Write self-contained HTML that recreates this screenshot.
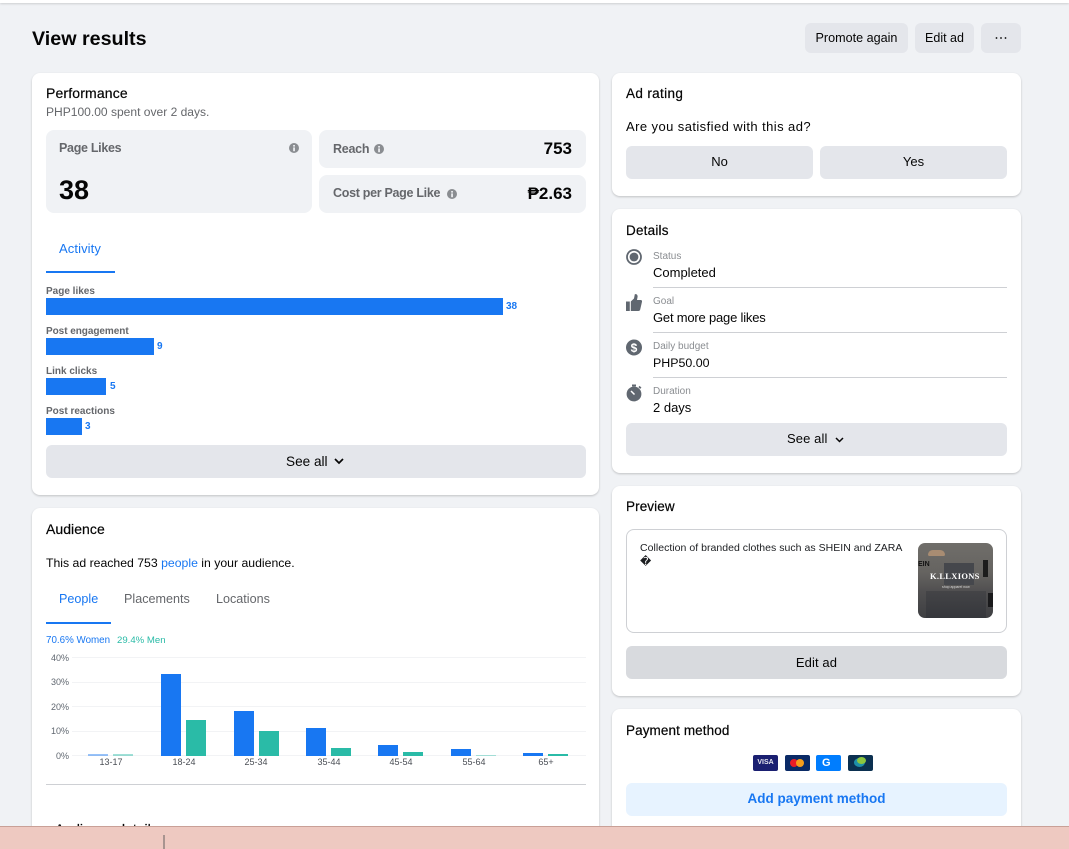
<!DOCTYPE html>
<html><head><meta charset="utf-8"><style>
html,body{margin:0;padding:0;width:1069px;height:849px;overflow:hidden;background:#f0f2f5;font-family:"Liberation Sans",sans-serif;color:#050505}
div,span.a,svg.a{position:absolute}
.t{white-space:nowrap;line-height:16px;font-size:13px}
.card{background:#fff;border-radius:8px;box-shadow:0 1px 2px rgba(0,0,0,.2)}
.btn{background:#e4e6eb;border-radius:6px}
.c{text-align:center}
.h{font-size:14px;line-height:18px;white-space:nowrap;-webkit-text-stroke:.2px #050505}
.g{background:#f0f2f5;border-radius:8px}
.sub{color:#65676b;font-weight:bold}
.lab{font-size:10px;font-weight:bold;color:#65676b;white-space:nowrap;line-height:12px}
.bar{background:#1877f2;left:46px;height:17px}
.num{font-size:10px;font-weight:bold;color:#1877f2;line-height:12px}
.dl{font-size:10px;color:#8a8d91;line-height:12px;left:653px;white-space:nowrap}
.dv{font-size:13px;line-height:16px;left:653px;white-space:nowrap}
.hr{left:653px;width:354px;height:1px;background:#ced0d4}
.gl{left:72px;width:514px;height:1px;background:#f2f3f5}
.yl{font-size:9px;color:#606770;width:24px;left:45px;text-align:right;line-height:10px}
.xl{font-size:9px;color:#4b4f56;width:50px;text-align:center;line-height:10px}
.f{background:#1877f2;width:20px}.m{background:#2abba7;width:20px}
</style></head><body>
<div style="left:0;top:0;width:1069px;height:3px;background:#fff;box-shadow:0 1px 2px rgba(0,0,0,.15)"></div>
<div class="t" style="left:32px;top:27px;font-size:19.7px;font-weight:bold;line-height:24px">View results</div>
<div class="btn t c" style="left:805px;top:23px;width:103px;height:30px;line-height:30px;font-size:12.6px">Promote again</div>
<div class="btn t c" style="left:915px;top:23px;width:59px;height:30px;line-height:30px;font-size:12.5px">Edit ad</div>
<div class="btn" style="left:981px;top:23px;width:40px;height:30px"></div>
<svg class="a" style="left:995px;top:36px" width="12" height="4"><circle cx="1.5" cy="2" r=".9" fill="#050505"/><circle cx="6" cy="2" r=".9" fill="#050505"/><circle cx="10.5" cy="2" r=".9" fill="#050505"/></svg>

<!-- Performance -->
<div class="card" style="left:32px;top:73px;width:567px;height:422px"></div>
<div class="h" style="left:46px;top:84px;letter-spacing:.15px">Performance</div>
<div class="t" style="left:46px;top:104px;color:#65676b;font-size:12.05px">PHP100.00 spent over 2 days.</div>
<div class="g" style="left:46px;top:130px;width:266px;height:83px"></div>
<div class="g" style="left:319px;top:130px;width:267px;height:38px"></div>
<div class="g" style="left:319px;top:175px;width:267px;height:38px"></div>
<div class="t sub" style="left:59px;top:140px;font-size:12.5px;letter-spacing:-.3px">Page Likes</div>
<div class="t" style="left:59px;top:174px;font-size:27px;font-weight:bold;line-height:32px">38</div>
<div class="t sub" style="left:333px;top:141px;font-size:12.5px;letter-spacing:-.25px">Reach</div>
<div class="t" style="right:497px;top:140px;font-size:17px;font-weight:bold;line-height:18px">753</div>
<div class="t sub" style="left:333px;top:185px;font-size:12.5px;letter-spacing:-.3px">Cost per Page Like</div>
<div class="t" style="right:497px;top:185px;font-size:17px;font-weight:bold;line-height:18px">₱2.63</div>
<svg class="a" style="left:289px;top:143px" width="10" height="10"><circle cx="5" cy="5" r="5" fill="#8a8d91"/><rect x="4.2" y="4.4" width="1.7" height="3.8" fill="#f0f2f5"/><rect x="4.2" y="2" width="1.7" height="1.6" fill="#f0f2f5"/></svg>
<svg class="a" style="left:374px;top:144px" width="10" height="10"><circle cx="5" cy="5" r="5" fill="#8a8d91"/><rect x="4.2" y="4.4" width="1.7" height="3.8" fill="#f0f2f5"/><rect x="4.2" y="2" width="1.7" height="1.6" fill="#f0f2f5"/></svg>
<svg class="a" style="left:447px;top:189px" width="10" height="10"><circle cx="5" cy="5" r="5" fill="#8a8d91"/><rect x="4.2" y="4.4" width="1.7" height="3.8" fill="#f0f2f5"/><rect x="4.2" y="2" width="1.7" height="1.6" fill="#f0f2f5"/></svg>
<div class="t" style="left:59px;top:241px;color:#1877f2;letter-spacing:.1px">Activity</div>
<div style="left:46px;top:271px;width:69px;height:2px;background:#1877f2"></div>

<div class="lab" style="left:46px;top:286px">Page likes</div>
<div class="bar" style="top:298px;width:457px"></div><div class="num" style="left:506px;top:301px">38</div>
<div class="lab" style="left:46px;top:326px;letter-spacing:-.05px">Post engagement</div>
<div class="bar" style="top:338px;width:108px"></div><div class="num" style="left:157px;top:341px">9</div>
<div class="lab" style="left:46px;top:366px">Link clicks</div>
<div class="bar" style="top:378px;width:60px"></div><div class="num" style="left:110px;top:381px">5</div>
<div class="lab" style="left:46px;top:406px">Post reactions</div>
<div class="bar" style="top:418px;width:36px"></div><div class="num" style="left:85px;top:421px">3</div>

<div class="btn" style="left:46px;top:445px;width:540px;height:33px"></div>
<div class="t" style="left:286px;top:453px;font-size:13.6px;line-height:17px">See all</div>
<svg class="a" style="left:334px;top:458px" width="10" height="7"><path d="M1 1l4 4 4-4" fill="none" stroke="#050505" stroke-width="1.7"/></svg>

<!-- Audience -->
<div class="card" style="left:32px;top:508px;width:567px;height:330px"></div>
<div class="h" style="left:46px;top:520px;letter-spacing:.05px">Audience</div>
<div class="t" style="left:46px;top:555px;font-size:12.25px">This ad reached 753 <span style="color:#1877f2">people</span> in your audience.</div>
<div class="t" style="left:59px;top:591px;color:#1877f2;font-size:12.6px">People</div>
<div class="t" style="left:124px;top:591px;color:#65676b;font-size:12.6px">Placements</div>
<div class="t" style="left:216px;top:591px;color:#65676b;font-size:12.6px">Locations</div>
<div style="left:46px;top:622px;width:65px;height:2px;background:#1877f2"></div>
<div class="t" style="left:46px;top:634px;font-size:9.8px;color:#1877f2;line-height:14px">70.6% Women</div>
<div class="t" style="left:117px;top:634px;font-size:9.6px;color:#2abba7;line-height:14px">29.4% Men</div>

<div class="gl" style="top:657px"></div><div class="gl" style="top:682px"></div><div class="gl" style="top:706px"></div><div class="gl" style="top:731px"></div><div class="gl" style="top:755px"></div>
<div class="yl" style="top:653px">40%</div><div class="yl" style="top:677px">30%</div><div class="yl" style="top:702px">20%</div><div class="yl" style="top:726px">10%</div><div class="yl" style="top:751px">0%</div>

<div class="f" style="left:88px;top:754px;height:2px;opacity:.45"></div><div class="m" style="left:113px;top:754px;height:2px;opacity:.45"></div>
<div class="f" style="left:161px;top:674px;height:82px"></div><div class="m" style="left:186px;top:720px;height:36px"></div>
<div class="f" style="left:234px;top:711px;height:45px"></div><div class="m" style="left:259px;top:731px;height:25px"></div>
<div class="f" style="left:306px;top:728px;height:28px"></div><div class="m" style="left:331px;top:748px;height:8px"></div>
<div class="f" style="left:378px;top:745px;height:11px"></div><div class="m" style="left:403px;top:752px;height:4px"></div>
<div class="f" style="left:451px;top:749px;height:7px"></div><div class="m" style="left:476px;top:755px;height:1px;opacity:.4"></div>
<div class="f" style="left:523px;top:753px;height:3px"></div><div class="m" style="left:548px;top:754px;height:2px"></div>

<div class="xl" style="left:86px;top:757px">13-17</div><div class="xl" style="left:159px;top:757px">18-24</div><div class="xl" style="left:231px;top:757px">25-34</div><div class="xl" style="left:304px;top:757px">35-44</div><div class="xl" style="left:376px;top:757px">45-54</div><div class="xl" style="left:449px;top:757px">55-64</div><div class="xl" style="left:521px;top:757px">65+</div>
<div style="left:46px;top:784px;width:540px;height:1px;background:#ced0d4"></div>
<div class="h" style="left:55px;top:820px">Audience details</div>

<!-- Ad rating -->
<div class="card" style="left:612px;top:73px;width:409px;height:123px"></div>
<div class="h" style="left:626px;top:85px;font-size:13.5px;letter-spacing:.35px">Ad rating</div>
<div class="t" style="left:626px;top:119px;letter-spacing:.42px">Are you satisfied with this ad?</div>
<div class="btn t c" style="left:626px;top:146px;width:187px;height:33px;line-height:31px">No</div>
<div class="btn t c" style="left:820px;top:146px;width:187px;height:33px;line-height:31px">Yes</div>

<!-- Details -->
<div class="card" style="left:612px;top:209px;width:409px;height:264px"></div>
<div class="h" style="left:626px;top:222px;font-size:13.5px;letter-spacing:.2px">Details</div>
<svg class="a" style="left:626px;top:249px" width="16" height="16"><circle cx="8" cy="8" r="7" fill="none" stroke="#606770" stroke-width="1.8"/><circle cx="8" cy="8" r="4.4" fill="#606770"/></svg>
<div class="dl" style="top:251px">Status</div><div class="dv" style="top:265px">Completed</div><div class="hr" style="top:287px"></div>
<svg class="a" style="left:626px;top:294px" width="16" height="17"><path d="M0 7.500h3.800V17H0zM4.800 7.500l3.200-3 .8-4.200c1.800-.6 3 .7 2.800 2.500L11 6h3.800c1 0 1.400 1 1.200 1.800l-1.800 7.700c-.2.900-.9 1.500-1.800 1.500H4.800z" fill="#606770"/></svg>
<div class="dl" style="top:296px">Goal</div><div class="dv" style="top:310px;letter-spacing:-.2px">Get more page likes</div><div class="hr" style="top:332px"></div>
<svg class="a" style="left:626px;top:339px" width="16" height="17"><circle cx="8" cy="8.500" r="8" fill="#606770"/><text x="8" y="13" text-anchor="middle" font-size="12" font-weight="bold" font-family="Liberation Sans" fill="#fff">$</text></svg>
<div class="dl" style="top:341px">Daily budget</div><div class="dv" style="top:355px;font-size:12.4px">PHP50.00</div><div class="hr" style="top:377px"></div>
<svg class="a" style="left:626px;top:384px" width="16" height="18"><circle cx="8" cy="10" r="7.400" fill="#606770"/><rect x="6" y="0.500" width="4" height="2" fill="#606770"/><path d="M13 2.500l1.800 1.800" stroke="#606770" stroke-width="1.800"/><path d="M5 7l3.500 3.500" stroke="#fff" stroke-width="1.500"/></svg>
<div class="dl" style="top:386px">Duration</div><div class="dv" style="top:400px">2 days</div>
<div class="btn" style="left:626px;top:423px;width:381px;height:33px"></div>
<div class="t" style="left:787px;top:431px;letter-spacing:.1px">See all</div>
<svg class="a" style="left:835px;top:437px" width="9" height="6"><path d="M1 1l3.500 3.500L8 1" fill="none" stroke="#050505" stroke-width="1.500"/></svg>

<!-- Preview -->
<div class="card" style="left:612px;top:486px;width:409px;height:210px"></div>
<div class="h" style="left:626px;top:498px;font-size:13.5px;letter-spacing:.1px">Preview</div>
<div style="left:626px;top:529px;width:379px;height:102px;border:1px solid #ced0d4;border-radius:8px"></div>
<div class="t" style="left:640px;top:540px;font-size:10.5px;letter-spacing:.03px;color:#1c1e21">Collection of branded clothes such as SHEIN and ZARA</div>
<div class="t" style="left:640px;top:554px;font-size:11px;color:#1c1e21">�</div>
<div style="left:918px;top:543px;width:75px;height:75px;border-radius:7px;overflow:hidden;background:linear-gradient(180deg,#706e6a 0%,#656360 40%,#504f50 65%,#3e3f42 100%)">
  <div style="left:10px;top:7px;width:17px;height:6px;background:#a88c72;border-radius:8px 8px 2px 2px"></div>
  <div style="left:26px;top:20px;width:30px;height:22px;background:#45474c"></div>
  <div style="left:8px;top:48px;width:60px;height:27px;background:linear-gradient(180deg,#3a3b40,#2e3036);opacity:.55"></div>
  <div style="left:70px;top:50px;width:5px;height:14px;background:#1a1a1c"></div>
  <div style="left:65px;top:17px;width:5px;height:17px;background:#1c1c1c"></div>
  <div class="t" style="left:0;top:18px;font-size:7px;line-height:8px;font-weight:bold;color:#111">EIN</div>
  <div class="t" style="left:12px;top:29px;font-family:'Liberation Serif',serif;font-size:8.500px;line-height:9px;font-weight:bold;letter-spacing:.3px;color:#fff">K.LLXIONS</div>
  <div class="t" style="left:24px;top:42px;font-size:3.500px;line-height:5px;color:#ddd">shop apparel now</div>
</div>
<div class="t c" style="left:626px;top:646px;width:381px;height:33px;background:#d8dade;border-radius:6px;line-height:33px;letter-spacing:.1px">Edit ad</div>

<!-- Payment -->
<div class="card" style="left:612px;top:709px;width:409px;height:130px"></div>
<div class="h" style="left:626px;top:722px;font-size:13.5px;letter-spacing:.1px">Payment method</div>
<div style="left:753px;top:755px;width:25px;height:16px;background:#1a1f71;border-radius:2px;color:#e8e8f0;font-size:7px;font-weight:bold;line-height:16px;text-align:center">VISA</div>
<div style="left:785px;top:755px;width:25px;height:16px;background:#0a2a66;border-radius:2px"></div>
<div style="left:790px;top:759px;width:8px;height:8px;border-radius:50%;background:#eb1c26"></div>
<div style="left:796px;top:759px;width:8px;height:8px;border-radius:50%;background:#f79e1b"></div>
<div style="left:816px;top:755px;width:25px;height:16px;background:#007dfe;border-radius:2px;color:#fff;font-size:11px;font-weight:bold;line-height:16px;padding-left:6px;box-sizing:border-box">G</div>
<div style="left:848px;top:755px;width:25px;height:16px;background:#0b3050;border-radius:2px"></div>
<div style="left:854px;top:758px;width:11px;height:9px;border-radius:50%;background:#1e8ea8"></div>
<div style="left:857px;top:757px;width:9px;height:7px;border-radius:50%;background:#8cc63f"></div>
<div class="t c" style="left:626px;top:783px;width:381px;height:33px;background:#e7f3ff;border-radius:6px;line-height:31px;color:#1877f2;font-size:13.5px;font-weight:bold">Add payment method</div>

<!-- footer -->
<div style="left:0;top:826px;width:1069px;height:23px;background:#eec9c1;border-top:1px solid #c9a097;box-sizing:border-box"></div>
<div style="left:163px;top:835px;width:2px;height:14px;background:#a89490"></div>
</body></html>
